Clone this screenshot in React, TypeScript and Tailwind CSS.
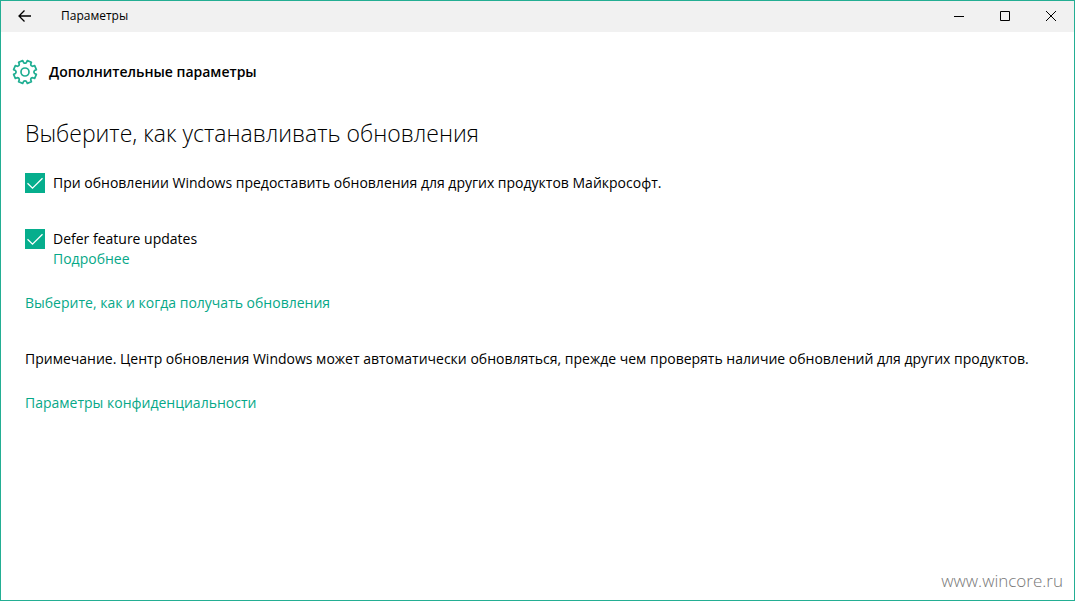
import React from "react";

const GearIcon = () => {
  const point = (radius: number, degrees: number) => {
    const angle = (degrees * Math.PI) / 180;
    return `${(13 + radius * Math.cos(angle)).toFixed(2)},${(13 + radius * Math.sin(angle)).toFixed(2)}`;
  };

  // eight teeth, with a rounded notch at the top
  const teeth = Array.from({ length: 8 }, (_, index) => {
    const middle = 22.5 + index * 45;
    return [
      `${index === 0 ? "M" : "L"}${point(9.6, middle - 14)}`,
      `L${point(11.6, middle - 11)}`,
      `L${point(11.6, middle + 11)}`,
      `L${point(9.6, middle + 14)}`,
      `Q${point(8.2, middle + 22.5)} ${point(9.6, middle + 31)}`,
    ].join("");
  });

  return (
    <svg width="26" height="26" viewBox="0 0 26 26" fill="none" aria-hidden="true">
      <path
        d={`${teeth.join("")}Z`}
        stroke="#1fae92"
        strokeWidth="1.7"
        strokeLinejoin="round"
      />
      <circle cx="13" cy="13" r="4" stroke="#1fae92" strokeWidth="1.7" />
    </svg>
  );
};

const TitleBar = () => (
  <header className="flex h-[31px] items-center bg-[#f1f1f1] pb-px text-black">
    <button
      type="button"
      aria-label="Назад"
      className="flex h-full w-12 items-center justify-center"
    >
      <svg width="14" height="12" viewBox="0 0 14 12" fill="none" stroke="currentColor" strokeWidth="1.3">
        <path d="M6.5 0.5L1 6l5.5 5.5M1 6h12" />
      </svg>
    </button>
    <span className="ml-3 text-[12px] leading-4">Параметры</span>

    <div className="ml-auto flex h-full">
      <button
        type="button"
        aria-label="Свернуть"
        className="flex h-full w-[46px] items-center justify-center"
      >
        <svg width="10" height="10" viewBox="0 0 10 10" stroke="currentColor">
          <path d="M0 5.5h10" />
        </svg>
      </button>
      <button
        type="button"
        aria-label="Развернуть"
        className="flex h-full w-[46px] items-center justify-center"
      >
        <svg width="10" height="10" viewBox="0 0 10 10" fill="none" stroke="currentColor">
          <path d="M0.5 0.5h9v9h-9z" />
        </svg>
      </button>
      <button
        type="button"
        aria-label="Закрыть"
        className="flex h-full w-[46px] items-center justify-center"
      >
        <svg width="10" height="10" viewBox="0 0 10 10" stroke="currentColor">
          <path d="M0 0l10 10M10 0L0 10" />
        </svg>
      </button>
    </div>
  </header>
);

interface CheckOptionProps {
  id: string;
  label: string;
}

const CheckOption = ({ id, label }: CheckOptionProps) => (
  <div className="flex items-center gap-2">
    <span className="grid size-5 shrink-0">
      <input
        id={id}
        type="checkbox"
        defaultChecked
        className="peer col-start-1 row-start-1 size-5 appearance-none border-2 border-[#666666] bg-white checked:border-0 checked:bg-[#06ae8d]"
      />
      <svg
        viewBox="0 0 20 20"
        fill="none"
        stroke="white"
        strokeWidth="1.3"
        className="pointer-events-none invisible col-start-1 row-start-1 size-5 peer-checked:visible"
      >
        <path d="M2.5 10.2l5 5L17.5 5.2" />
      </svg>
    </span>
    <label htmlFor={id}>{label}</label>
  </div>
);

const App = () => {
  return (
    <div className="flex min-h-screen flex-col border border-[#23ae93] bg-white font-['Open_Sans','Noto_Sans',sans-serif] text-[14px] leading-5 text-black">
      <TitleBar />

      <main className="flex-1">
        <div className="flex items-center gap-[11px] px-[11px] pt-[27px]">
          <GearIcon />
          <h1 className="text-[14px] leading-5 font-semibold">Дополнительные параметры</h1>
        </div>

        <section className="px-6 pt-8">
          <h2 className="text-[23px] leading-8 font-light">
            Выберите, как устанавливать обновления
          </h2>

          <div className="mt-6">
            <CheckOption
              id="other-products"
              label="При обновлении Windows предоставить обновления для других продуктов Майкрософт."
            />
          </div>

          <div className="mt-9">
            <CheckOption id="defer-updates" label="Defer feature updates" />
            <a href="#details" className="ml-7 block w-fit text-[#06a888]">
              Подробнее
            </a>
          </div>

          <a href="#delivery" className="mt-6 block w-fit text-[#06a888]">
            Выберите, как и когда получать обновления
          </a>

          <p className="mt-9">
            Примечание. Центр обновления Windows может автоматически обновляться, прежде чем
            проверять наличие обновлений для других продуктов.
          </p>

          <a href="#privacy" className="mt-6 block w-fit text-[#06a888]">
            Параметры конфиденциальности
          </a>
        </section>
      </main>

      <footer className="px-[11px] pb-[7px] text-right text-[17px] leading-6 font-light text-[#777777]">
        www.wincore.ru
      </footer>
    </div>
  );
};

export default App;
